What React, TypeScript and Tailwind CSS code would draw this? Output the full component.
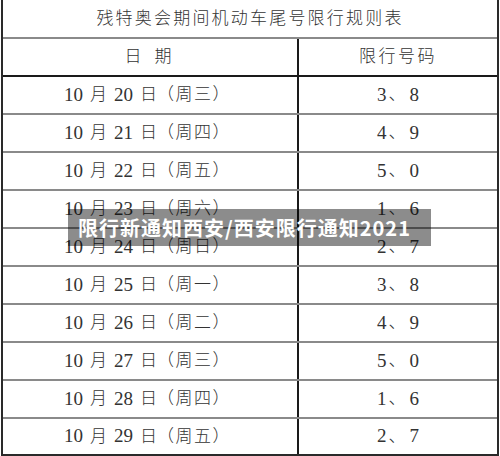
import React from "react"

const rows: Array<[string, string, string]> = [
	["20", "三", "3、8"],
	["21", "四", "4、9"],
	["22", "五", "5、0"],
	["23", "六", "1、6"],
	["24", "日", "2、7"],
	["25", "一", "3、8"],
	["26", "二", "4、9"],
	["27", "三", "5、0"],
	["28", "四", "1、6"],
	["29", "五", "2、7"],
]

const font = { fontFamily: '"Liberation Serif", "Noto Sans CJK SC", serif' }

export default function App() {
	return (
		<div className="relative w-[500px] h-[456px] bg-white overflow-hidden text-[#333]" style={font}>
			<div className="mx-[1px] w-[498px] h-[456px] border-l-2 border-r-2 border-b-2 border-[#2a2a2a] flex flex-col">
				<div className="h-[39px] shrink-0 border-b-2 border-[#8a8a8a] flex items-center justify-center text-[17px] tracking-[2.2px] font-light">
					残特奥会期间机动车尾号限行规则表
				</div>
				<div className="h-[38px] shrink-0 border-b-2 border-[#1a1a1a] grid grid-cols-[296px_1fr] text-[17px] font-light">
					<div className="border-r-2 border-[#1a1a1a] flex items-center justify-center pr-[4px]">
						<span>日</span>
						<span className="ml-[13px]">期</span>
					</div>
					<div className="flex items-center justify-center tracking-[2.5px]">限行号码</div>
				</div>
				{rows.map(([d, w, n], i) => (
					<div
						key={i}
						className={
							i === rows.length - 1
								? "flex-1 grid grid-cols-[296px_1fr] text-[19px]"
								: "h-[38px] shrink-0 border-b-2 border-[#8a8a8a] grid grid-cols-[296px_1fr] text-[19px]"
						}
					>
						<div className="border-r-2 border-[#1a1a1a] flex items-center justify-center pr-[5px]">
							<span>10</span>
							<span className="ml-[7px] font-light text-[17px]">月</span>
							<span className="ml-[7px]">{d}</span>
							<span className="ml-[7px] font-light text-[17px]">日</span>
							<span className="font-light text-[17px] tracking-[1.5px]">（周{w}）</span>
						</div>
						<div className="flex items-center justify-center">
							<span>{n[0]}</span>
							<span className="font-light text-[17px] mx-[2px]">、</span>
							<span className="ml-[2px]">{n[2]}</span>
						</div>
					</div>
				))}
			</div>
			<div
				className="absolute left-[68px] top-[209px] w-[363px] h-[37px] bg-[rgba(0,0,0,0.45)] flex items-center pl-[10px] text-white text-[20px] font-bold tracking-[1px]"
				style={{ fontFamily: '"Noto Sans CJK SC", sans-serif' }}
			>
				限行新通知西安/西安限行通知2021
			</div>
		</div>
	)
}
